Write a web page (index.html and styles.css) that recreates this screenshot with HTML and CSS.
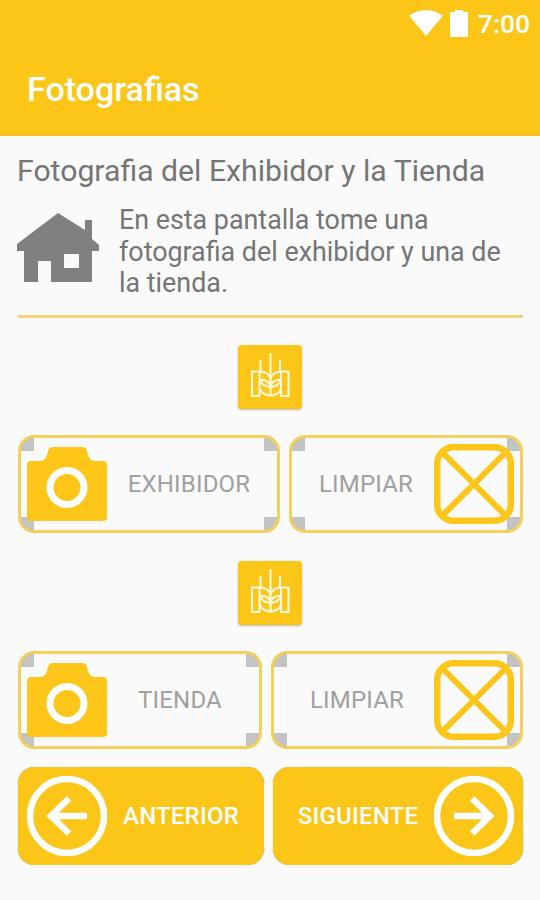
FILE: index.html
```
<!DOCTYPE html>
<html lang="es">
<head>
<meta charset="utf-8">
<title>Fotografias</title>
<link rel="stylesheet" href="styles.css">
</head>
<body>
<svg class="defs" width="0" height="0">
  <symbol id="wheat" viewBox="0 0 64 64">
    <g fill="none" stroke="#fff8df" stroke-width="2.1" stroke-linejoin="round">
      <path d="M32.500 8v43M22.500 15v12M42 15v12M22 26.500h-8V51h7.500V27M42.500 26.500h8V51H43V27"/>
      <path d="M32.500 34c-1-5-4-7-10-7.500M32.500 34c1-5 4-7 10-7.500"/>
      <path d="M22 35c1 4 5 6.500 10.500 7 5.500-.5 9.500-3 10.500-7M22 35c5-.5 9 2 10.500 6 1.500-4 5.500-6.500 10.500-6"/>
      <path d="M22 43.500c1 4 5 6.500 10.500 7 5.500-.5 9.500-3 10.500-7"/>
    </g>
  </symbol>
  <symbol id="camera" viewBox="0 0 80 80">
    <path fill="#fdc618" d="M4 17h10q5-1 6-6l1-4q1-4 5-4h29q4 0 5 4l1 4q1 5 6 6h9q4 0 4 4v52q0 4-4 4H4q-4 0-4-4V21q0-4 4-4z"/>
    <circle cx="40" cy="43.500" r="17" fill="none" stroke="#fff" stroke-width="7"/>
  </symbol>
  <symbol id="clear" viewBox="0 0 80 80">
    <g fill="none" stroke="#fdc618" stroke-width="6.5"><rect x="3.25" y="3.25" width="73.5" height="73.5" rx="16"/><path stroke-width="6" d="M7 7l66 66M73 7L7 73"/></g>
  </symbol>
  <symbol id="arrow" viewBox="0 0 80 80">
    <g fill="none" stroke="#fff"><circle cx="40" cy="40" r="37" stroke-width="6.5"/><path stroke-width="6.5" d="M20 40h36M38 22.500l18 17.500-18 17.500"/></g>
  </symbol>
</svg>
<header class="header">
  <div class="status">
    <svg width="34" height="27" viewBox="0 0 34 27"><path fill="#fff" d="M0 5.500Q17-5 34 5.500L17 26z"/></svg>
    <svg class="battery" width="20" height="30" viewBox="0 0 20 30"><path fill="#fff" d="M2 3h4V1h8v2h4q1 0 1 1v23q0 1-1 1H2q-1 0-1-1V4q0-1 1-1z"/></svg>
    <span class="clock">7:00</span>
  </div>
  <h1 class="title">Fotografias</h1>
</header>
<main class="content">
  <h2 class="heading">Fotografia del Exhibidor y la Tienda</h2>
  <section class="intro">
    <svg width="82" height="70" viewBox="0 0 82 70"><path fill="#808080" fill-rule="evenodd" d="M41 0L68 17V7h7v19l7 6v6h-7v31H34V48H21v21H7V38H0v-7zM47 41v14h15V41z"/></svg>
    <p class="copy">En esta pantalla tome una<br>fotografia del exhibidor y una de<br>la tienda.</p>
  </section>
  <div class="thumb"><svg width="64" height="64"><use href="#wheat"/></svg></div>
  <div class="row row-exhibitor">
    <button class="btn"><svg width="80" height="80"><use href="#camera"/></svg><span class="label">EXHIBIDOR</span></button>
    <button class="btn"><span class="label">LIMPIAR</span><svg width="80" height="80"><use href="#clear"/></svg></button>
  </div>
  <div class="thumb thumb-store"><svg width="64" height="64"><use href="#wheat"/></svg></div>
  <div class="row row-store">
    <button class="btn"><svg width="80" height="80"><use href="#camera"/></svg><span class="label">TIENDA</span></button>
    <button class="btn"><span class="label">LIMPIAR</span><svg width="80" height="80"><use href="#clear"/></svg></button>
  </div>
  <div class="row row-nav">
    <button class="btn solid"><svg class="back" width="80" height="80"><use href="#arrow"/></svg><span class="label">ANTERIOR</span></button>
    <button class="btn solid"><span class="label">SIGUIENTE</span><svg width="80" height="80"><use href="#arrow"/></svg></button>
  </div>
</main>
</body>
</html>
```
FILE: styles.css
```
* { box-sizing: border-box; }
body { margin: 0; background: #fafafa; font-family: Roboto, sans-serif; color: #757575; }
svg { display: block; flex: none; }
.defs { position: absolute; }
.header { height: 136px; background: #fcc618; color: #fff; border-bottom: 1px solid #efbd25; }
.status { height: 45px; padding: 2px 10px 0 0; display: flex; align-items: center; justify-content: flex-end; }
.battery { margin-left: 6px; }
.clock { margin-left: 9px; font-size: 26.500px; font-weight: 500; line-height: 30px; }
.title { margin: 24px 0 0 27px; font-size: 34px; line-height: 41px; font-weight: 500; }
.content { padding: 15px 17px 0 18px; }
.heading { margin: 0 0 0 -1px; font-size: 30.200px; line-height: 40px; font-weight: 400; white-space: nowrap; }
.intro { display: flex; height: 127px; padding-top: 13px; border-bottom: 3px solid #f3d372; }
.intro svg { margin-top: 9px; margin-left: -1px; }
.copy { margin: 1px 0 0 20px; font-size: 26.850px; line-height: 31.500px; white-space: nowrap; }
.thumb { width: 64px; height: 64px; margin: 27px 0 26px 220px; border-radius: 4px; background: #fcc618; box-shadow: 0 1px 2px #0004; }
.thumb-store { margin-top: 28px; }
.row { display: grid; gap: 9px; height: 98px; }
.row-exhibitor { grid-template-columns: 262px 1fr; }
.row-store { grid-template-columns: 244px 1fr; }
.row-nav { grid-template-columns: 246px 1fr; margin-top: 18px; }
.btn { display: flex; align-items: center; min-width: 0; padding: 0 6px; border: 3px solid #f4d05c; border-radius: 16px; font: 400 24px/30px Roboto, sans-serif; color: #a0a0a0;
  background: linear-gradient(#c3c3c3, #c3c3c3) 0 0 / 13px 13px no-repeat, linear-gradient(#c3c3c3, #c3c3c3) 100% 0 / 13px 13px no-repeat, linear-gradient(#c3c3c3, #c3c3c3) 0 100% / 13px 13px no-repeat, linear-gradient(#c3c3c3, #c3c3c3) 100% 100% / 13px 13px no-repeat, #fafafa; }
.label { flex: 1; text-align: center; letter-spacing: .2px; }
.solid { background: #fcc618; border-color: #fcc618; color: #fff; font-weight: 500; box-shadow: 0 0 1px #999; }
.back { transform: rotate(180deg); }
```
